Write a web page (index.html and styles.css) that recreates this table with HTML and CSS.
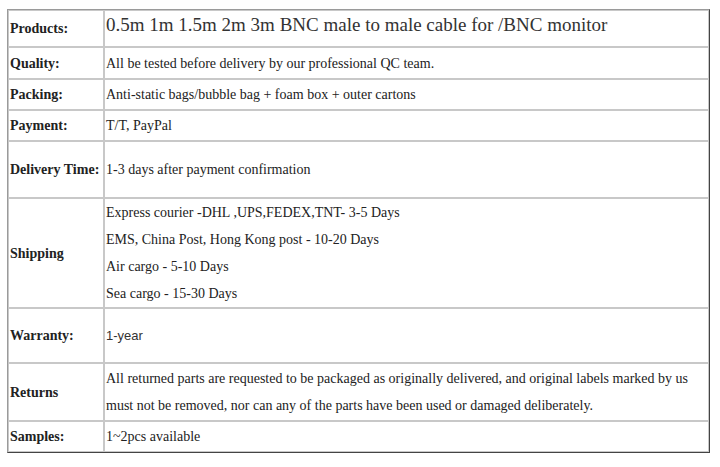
FILE: index.html
```html
<!DOCTYPE html>
<html>
<head>
<meta charset="utf-8">
<link rel="stylesheet" href="styles.css">
</head>
<body>
<div class="wrap">
<table class="spec">
  <tr class="r-products">
    <td class="label">Products:</td>
    <td class="value title">0.5m 1m 1.5m 2m 3m BNC male to male cable for /BNC monitor</td>
  </tr>
  <tr class="r-quality">
    <td class="label">Quality:</td>
    <td class="value">All be tested before delivery by our professional QC team.</td>
  </tr>
  <tr class="r-packing">
    <td class="label">Packing:</td>
    <td class="value">Anti-static bags/bubble bag + foam box + outer cartons</td>
  </tr>
  <tr class="r-payment">
    <td class="label">Payment:</td>
    <td class="value">T/T, PayPal</td>
  </tr>
  <tr class="r-delivery">
    <td class="label">Delivery Time:</td>
    <td class="value">1-3 days after payment confirmation</td>
  </tr>
  <tr class="r-shipping">
    <td class="label">Shipping</td>
    <td class="value lines">Express courier -DHL ,UPS,FEDEX,TNT- 3-5 Days<br>EMS, China Post, Hong Kong post - 10-20 Days<br>Air cargo - 5-10 Days<br>Sea cargo - 15-30 Days</td>
  </tr>
  <tr class="r-warranty">
    <td class="label">Warranty:</td>
    <td class="value sans">1-year</td>
  </tr>
  <tr class="r-returns">
    <td class="label">Returns</td>
    <td class="value lines">All returned parts are requested to be packaged as originally delivered, and original labels marked by us<br>must not be removed, nor can any of the parts have been used or damaged deliberately.</td>
  </tr>
  <tr class="r-samples">
    <td class="label">Samples:</td>
    <td class="value">1~2pcs available</td>
  </tr>
</table>
</div>
</body>
</html>
```
FILE: styles.css
```css
html, body {
  margin: 0;
  padding: 0;
  background: #ffffff;
}
.wrap {
  padding: 9px 0 0 7px;
}
.spec {
  width: 703px;
  border-collapse: separate;
  border-spacing: 0;
  border-style: solid;
  border-width: 1px;
  border-color: #9a9a9a #444444 #444444 #9a9a9a;
  font-family: "Liberation Serif", "Times New Roman", serif;
  font-size: 14px;
  color: #222222;
}
.spec td {
  border: 1px solid #c8c8c8;
  padding: 0 1px;
  vertical-align: middle;
  line-height: 27px;
}
.label {
  width: 92px;
  font-weight: bold;
  white-space: nowrap;
}
.title {
  font-size: 19px;
  line-height: 24px;
  padding-bottom: 8px !important;
  color: #333333;
}
.sans {
  font-family: "Liberation Sans", Arial, sans-serif;
  font-size: 13px;
  color: #333333;
}
.r-products { height: 37px; }
.r-quality { height: 32px; }
.r-packing { height: 31px; }
.r-payment { height: 31px; }
.r-delivery { height: 57px; }
.r-shipping { height: 108px; }
.r-warranty { height: 55px; }
.r-returns { height: 58px; }
.r-samples { height: 31px; }
```
